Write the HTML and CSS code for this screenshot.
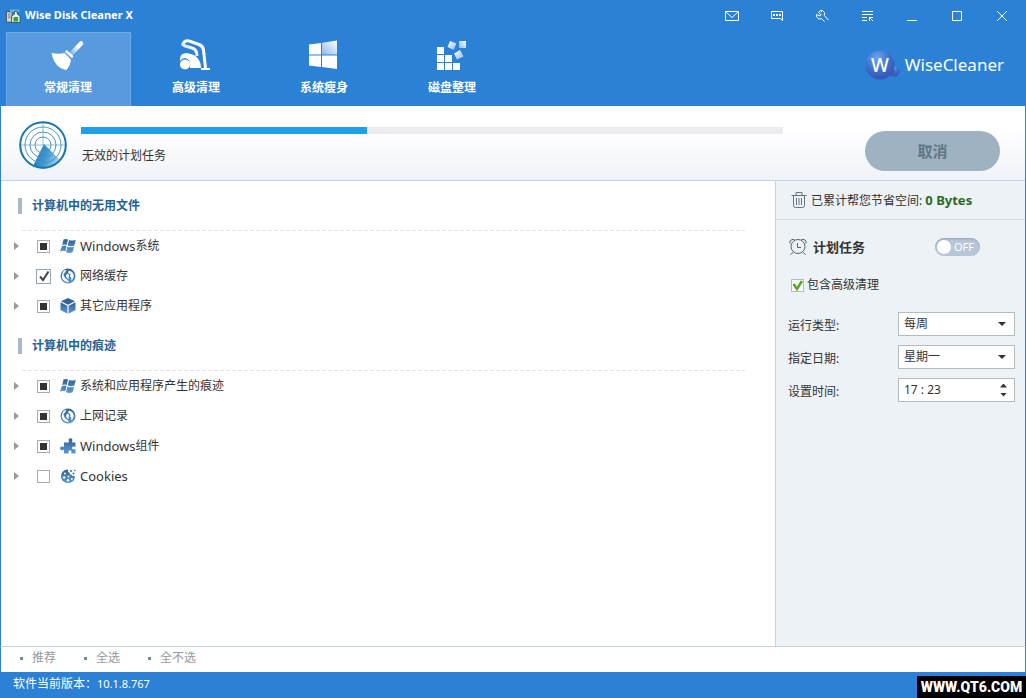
FILE: index.html
```
<!DOCTYPE html>
<html lang="zh-CN">
<head>
<meta charset="utf-8">
<title>Wise Disk Cleaner X</title>
<link rel="stylesheet" href="styles.css">
</head>
<body>
<svg class="defs" width="0" height="0" aria-hidden="true">
  <defs>
    <linearGradient id="steel" x1="0" y1="0" x2="0" y2="1"><stop offset="0" stop-color="#2f6094"/><stop offset="1" stop-color="#5b9bd3"/></linearGradient>
    <linearGradient id="fade" x1="1" y1="0" x2="0" y2="1"><stop offset="0.3" stop-color="#fff"/><stop offset="1" stop-color="#8fbcea"/></linearGradient>
    <linearGradient id="pane" x1="0" y1="1" x2="1" y2="0"><stop offset="0" stop-color="#8dbbea"/><stop offset="1" stop-color="#fff"/></linearGradient>
    <linearGradient id="tile" x1="0" y1="0" x2="1" y2="1"><stop offset="0" stop-color="#fff"/><stop offset="1" stop-color="#8dbbea"/></linearGradient>
    <radialGradient id="orb" cx="0.4" cy="0.25" r="0.8"><stop offset="0" stop-color="#6ba5ea"/><stop offset="0.55" stop-color="#3c6fd0"/><stop offset="1" stop-color="#3450ae"/></radialGradient>
    <linearGradient id="beam" x1="0" y1="0.3" x2="1" y2="0.6"><stop offset="0" stop-color="#1878bd"/><stop offset="0.5" stop-color="#3f98d2"/><stop offset="1" stop-color="#a9d3ec"/></linearGradient>
    <symbol id="flag" viewBox="0 0 16 16"><path fill="url(#steel)" d="M3.500 1.500Q6 .3 8 1.500L6.800 7Q4.600 5.800 2.200 7.100ZM9 2Q12 3.300 15.800 1.700L14.300 7.500Q11 8.800 7.800 7.400ZM1.900 8.200Q4.500 7 6.600 8.200L5.300 13.300Q3 12.100 0 13.400ZM7.500 8.700Q10.500 10 14 8.700L12.600 14.300Q9.500 15.700 6 14.200Z"/></symbol>
    <symbol id="globe" viewBox="0 0 16 16"><circle cx="8" cy="8" r="7.500" fill="url(#steel)"/><path fill="#fff" d="M3.500 3Q5 1.700 6.500 2L5 4.500 3.500 6Q3.500 8 5 10L7.500 12 9 14.300Q2.500 13.500 1.800 8.500 1.800 5 3.500 3ZM9 2.500Q13.800 4 13.800 8 13.500 11 11 12.500L11.500 10 10 8.500 10.500 6.500 8 4.500ZM6.500 6.500 8 5.500 9 7 8.500 9.500 9.500 11 7.500 10.500 6 8.500Z"/></symbol>
    <symbol id="cube" viewBox="0 0 16 16"><path fill="#2f6597" d="M8 0 15 3.200 8 6.800 1 3.200Z"/><path fill="url(#steel)" d="M.5 4.300 7.400 7.800V15.800L.5 12ZM15.500 4.300 8.600 7.800V15.800L15.500 12Z"/></symbol>
    <symbol id="puzzle" viewBox="0 0 16 16"><path fill="url(#steel)" d="M4 4.500H8.500Q9.300 3.800 8.700 2.800Q8.300.3 10.500.3Q12.700.3 12.300 2.800Q11.700 3.800 12.500 4.500H15.500V8.500Q14.800 9 13.700 8.600Q12 8.600 12 10Q12 11.400 13.700 11.300Q14.800 11 15.500 11.500V15.500H11.500Q11 14.800 11.500 13.800Q11.500 12.300 10 12.300Q8.500 12.300 8.500 13.800Q9 14.800 8.500 15.500H4V12Q3.300 11.500 2.500 12.200Q0 12.500 0 10.300Q0 8.200 2.500 8.500Q3.400 9 4 8.500Z"/></symbol>
    <symbol id="cookie" viewBox="0 0 16 16"><path fill="url(#steel)" d="M8 1.500Q7.500 4 9.500 4.500Q9.500 7 12 7Q13 8.800 15 8Q15 14.500 8.200 15Q1 14.500 1 8Q1.300 2 8 1.500Z"/><g fill="#fff"><circle cx="5" cy="5.500" r="1"/><circle cx="4.200" cy="9.500" r="1.200"/><circle cx="8.500" cy="8.500" r=".9"/><circle cx="8" cy="12.300" r="1.200"/><circle cx="11.800" cy="11" r="1"/></g><g fill="#386a9f"><circle cx="11" cy="3" r="1"/><circle cx="14.800" cy="2.500" r=".8"/><circle cx="13.500" cy="5.500" r="1"/></g></symbol>
  </defs>
</svg>

<header class="top">
  <div class="titlebar">
    <svg class="app-icon" viewBox="0 0 16 16" aria-hidden="true"><rect x="0" y="3" width="7" height="12" rx="1" fill="#444e55"/><rect x="1" y="4" width="5" height="10" fill="#d8dddf"/><path d="M2 6H5M2 8H5M2 10H5" stroke="#777"/><path d="M4 1H13L15 3 12 4H5Z" fill="#5bbbe7"/><path d="M9 3H12V6L15 8V15H6V8L9 6Z" fill="#eef6ef" stroke="#35515a"/><path d="M8 9H13V14H8Z" fill="#35a33b"/></svg>
    <h1 class="app-name">Wise Disk Cleaner X</h1>
    <div class="window-tools">
      <button class="tool" aria-label="邮件"><svg viewBox="0 0 16 16"><path d="M1.500 3.500H14.500V12.500H1.500ZM2 4 8 9.500 14 4"/></svg></button>
      <button class="tool" aria-label="反馈"><svg viewBox="0 0 16 16"><path d="M2.500 3.500H13.500V12.500L11.500 10.500H2.500Z"/><path d="M4 7H6M7 7H9M10 7H12" stroke-width="2"/></svg></button>
      <button class="tool" aria-label="工具"><svg viewBox="0 0 16 16"><path d="M8.500 2.500Q5.500 1.800 4.500 4.500L7 6.500 6 8 2.500 6.500Q1.800 9.500 4.500 10.800 6 11.300 7.500 10.500L10.500 13.500M8.500 2.500 6.800 4.200M8.500 2.500Q11.500 4 10.300 7.500L14.500 12"/></svg></button>
      <button class="tool" aria-label="菜单"><svg viewBox="0 0 16 16"><path d="M3 3.500H14M3 6.500H14M3 9.500H8M3 12.500H8M10.500 13V9.500H14M10.500 9.500 14 13"/></svg></button>
      <button class="tool" aria-label="最小化"><svg viewBox="0 0 16 16"><path d="M3 12.500H13"/></svg></button>
      <button class="tool" aria-label="最大化"><svg viewBox="0 0 16 16"><path d="M3.500 3.500H12.500V12.500H3.500Z"/></svg></button>
      <button class="tool" aria-label="关闭"><svg viewBox="0 0 16 16"><path d="M3 3 13 13M13 3 3 13"/></svg></button>
    </div>
  </div>
  <div class="navbar">
    <nav class="tabs">
      <button class="tab active"><svg viewBox="0 0 36 32"><path d="M22 14 31 4.500" stroke="url(#fade)" stroke-width="4.500" stroke-linecap="round"/><path d="M16.500 12.500 22 17.500" stroke="#fff" stroke-width="2.500" stroke-linecap="round"/><path fill="#fff" d="M14.500 14 21 20.500Q20.500 26 16.500 31 4.500 29 1.500 14 8.500 15.500 14.500 14Z"/></svg><span>常规清理</span></button>
      <button class="tab"><svg viewBox="0 0 36 32"><path d="M5 7Q5 1 11 2L21 5.500Q25 7 25.500 11L27.500 29" fill="none" stroke="#fff" stroke-width="3"/><path d="M5 4Q5 7 9 7.500L14 9Q19 10.500 19 17" fill="none" stroke="url(#fade)" stroke-width="3"/><path fill="#fff" d="M2 20Q2 14 9 14L16 16Q23 20 23 29H12Q13 20 7 19 4 19 2 22ZM23 29H32V31H23Z"/><circle cx="7" cy="25.500" r="5" fill="#fff"/></svg><span>高级清理</span></button>
      <button class="tab"><svg viewBox="0 0 36 32"><path fill="#fff" d="M3 5.500 15 4V15.500H3ZM3 16.500H15V28L3 26.500ZM16 16.500H31V30L16 28Z"/><path fill="url(#pane)" d="M16 3.800 31 1.500V15.500H16Z"/></svg><span>系统瘦身</span></button>
      <button class="tab"><svg viewBox="0 0 36 32"><path fill="#fff" d="M3 8H10V15H3ZM3 16H10V23H3ZM11 16H18V23H11ZM3 24H10V31H3ZM11 24H18V31H11ZM19 24H26V31H19Z"/><path fill="url(#pane)" d="M25 2H32V9H25Z"/><path fill="url(#tile)" d="M16 2 22.500 4.500 19.500 11 13.500 8Z"/><path fill="url(#tile)" d="M26 11 29.500 17.500 23 20.500 20 14.500Z"/></svg><span>磁盘整理</span></button>
    </nav>
    <div class="brand">
      <svg viewBox="0 0 36 30" aria-hidden="true"><circle cx="29" cy="21" r="5.500" fill="url(#orb)"/><path d="M23 20H30V26H21Z" fill="#3c60bd"/><circle cx="15" cy="15" r="14.500" fill="url(#orb)"/><text x="15" y="22" text-anchor="middle">W</text></svg>
      <span>WiseCleaner</span>
    </div>
  </div>
</header>

<section class="scan">
  <svg class="radar" viewBox="0 0 48 48" aria-hidden="true"><circle cx="24" cy="24" r="23" fill="#fff"/><path d="M25 23 14 45Q24 50 34 45.500 38 43.500 41 39Z" fill="url(#beam)"/><g fill="none" stroke="#4b93c3"><circle cx="24" cy="24" r="8"/><circle cx="24" cy="24" r="13"/><circle cx="24" cy="24" r="18"/><path d="M24 1V24M1 24H47" opacity=".6"/></g><circle cx="24" cy="24" r="22.800" fill="none" stroke="#1675ab" stroke-width="2"/></svg>
  <div class="progress-area">
    <progress class="progress" value="286" max="702" aria-label="进度"></progress>
    <p class="progress-text">无效的计划任务</p>
  </div>
  <button class="cancel">取消</button>
</section>

<main class="main">
  <section class="lists">
    <h2 class="group-title">计算机中的无用文件</h2>
    <ul class="items">
      <li class="item"><button class="expand" aria-label="展开"></button><input type="checkbox" id="c1" class="check" data-partial><svg><use href="#flag"/></svg><label for="c1"><span class="latin">Windows</span>系统</label></li>
      <li class="item"><button class="expand" aria-label="展开"></button><input type="checkbox" id="c2" class="check" checked><svg><use href="#globe"/></svg><label for="c2">网络缓存</label></li>
      <li class="item"><button class="expand" aria-label="展开"></button><input type="checkbox" id="c3" class="check" data-partial><svg><use href="#cube"/></svg><label for="c3">其它应用程序</label></li>
    </ul>
    <h2 class="group-title">计算机中的痕迹</h2>
    <ul class="items">
      <li class="item"><button class="expand" aria-label="展开"></button><input type="checkbox" id="c4" class="check" data-partial><svg><use href="#flag"/></svg><label for="c4">系统和应用程序产生的痕迹</label></li>
      <li class="item"><button class="expand" aria-label="展开"></button><input type="checkbox" id="c5" class="check" data-partial><svg><use href="#globe"/></svg><label for="c5">上网记录</label></li>
      <li class="item"><button class="expand" aria-label="展开"></button><input type="checkbox" id="c6" class="check" data-partial><svg><use href="#puzzle"/></svg><label for="c6"><span class="latin">Windows</span>组件</label></li>
      <li class="item"><button class="expand" aria-label="展开"></button><input type="checkbox" id="c7" class="check"><svg><use href="#cookie"/></svg><label for="c7"><span class="latin">Cookies</span></label></li>
    </ul>
  </section>

  <aside class="side">
    <div class="saved">
      <svg viewBox="0 0 16 16" aria-hidden="true"><path d="M.5 3.500H15.500M5 3V.500H11V3M2.500 4V13.500Q2.500 15.500 4.500 15.500H11.500Q13.500 15.500 13.500 13.500V4M5.500 6V13M8 6V13M10.500 6V13"/></svg>
      <span>已累计帮您节省空间: <strong>0 Bytes</strong></span>
    </div>
    <div class="schedule">
      <div class="schedule-head">
        <svg viewBox="0 0 18 18" aria-hidden="true"><circle cx="9" cy="8.500" r="7"/><path d="M8.500 5V9.500H12M1 5.500V3L3 1.500H5.500M17 5.500V3L15 1.500H12.500M4 14.500 1.500 16.500M14 14.500 16.500 16.500"/></svg>
        <h2>计划任务</h2>
        <button class="switch" role="switch" aria-checked="false" aria-label="计划任务"><span class="knob"></span>OFF</button>
      </div>
      <div class="include"><input type="checkbox" id="adv" class="green-check" checked><label for="adv">包含高级清理</label></div>
      <div class="field"><label for="type">运行类型:</label><select id="type"><option>每周</option></select></div>
      <div class="field"><label for="day">指定日期:</label><select id="day"><option>星期一</option></select></div>
      <div class="field"><label for="time">设置时间:</label><div class="spin"><input id="time" type="text" value="17 : 23"><span class="steps"><button aria-label="增加"></button><button class="down" aria-label="减少"></button></span></div></div>
    </div>
  </aside>
</main>

<footer class="foot">
  <div class="links"><a href="#">推荐</a><a href="#">全选</a><a href="#">全不选</a></div>
  <div class="status"><span>软件当前版本：</span><span>10.1.8.767</span></div>
  <div class="site-tag">WWW.QT6.COM</div>
</footer>
<script src="app.js"></script>
</body>
</html>
```
FILE: styles.css
```
* { box-sizing: border-box; }
html { background: #2b81d5; }
body {
  margin: 0;
  min-height: 100vh;
  display: flex;
  flex-direction: column;
  background: #fff;
  color: #333;
  font: 12px/18px "Noto Sans", "Noto Sans CJK SC", sans-serif;
}
h1, h2, p, ul { margin: 0; padding: 0; }
ul { list-style: none; }
button { border: 0; padding: 0; background: none; color: inherit; font: inherit; }
svg { flex: none; }
.defs { position: absolute; }

/* Header */
.top { background: #2b81d5; color: #fff; }
.titlebar { display: flex; align-items: center; height: 32px; padding: 0 2px 0 6px; }
.app-icon { width: 15px; height: 16px; margin-right: 4px; }
.app-name { padding-bottom: 2px; font-size: 11px; line-height: 18px; font-weight: 700; }
.window-tools { display: flex; margin-left: auto; }
.tool { width: 45px; height: 32px; display: grid; place-items: center; }
.tool svg { width: 16px; height: 16px; fill: none; stroke: #fff; }
.navbar { display: flex; align-items: center; justify-content: space-between; height: 74px; padding: 0 22px 0 6px; }
.tabs { display: flex; align-self: stretch; gap: 3px; }
.tab {
  width: 125px;
  display: flex;
  flex-direction: column;
  align-items: center;
  gap: 8px;
  padding: 6px 1px 0 0;
  border: 1px solid transparent;
  border-bottom: 0;
  font-weight: 700;
}
.tab svg { width: 36px; height: 32px; fill: none; }
.tab.active { background: #579ade; border-color: #6eaae5; }
.brand { display: flex; align-items: center; gap: 4px; padding-bottom: 9px; font: 17px/30px "Noto Sans", sans-serif; }
.brand svg { width: 36px; height: 30px; }
.brand text { fill: #fff; font: 500 19px "Noto Sans", sans-serif; }

/* Scan progress */
.scan {
  display: flex;
  align-items: flex-start;
  height: 75px;
  padding: 15px 25px 0 18px;
  border: solid #2b81d5;
  border-width: 0 1px;
  background: linear-gradient(#fff 30%, #eff2f7);
  box-shadow: inset 0 -1px #c6d2df;
}
.radar { width: 48px; height: 48px; margin-right: 14px; }
.progress-area { flex: 1; padding-top: 6px; }
.progress { display: block; width: 100%; height: 7px; appearance: none; border: 0; background: #ececec; }
.progress::-webkit-progress-bar { background: #ececec; }
.progress::-webkit-progress-value { background: #209fe9; }
.progress-text { padding: 13px 0 0 1px; }
.cancel {
  width: 135px;
  height: 40px;
  margin: 10px 0 0 82px;
  border-radius: 20px;
  background: #9fb2c2;
  color: #607785;
  font-size: 15px;
  font-weight: 700;
}

/* Content */
.main { flex: 1; display: flex; border: solid #2b81d5; border-width: 0 1px; }
.lists { flex: 1; padding: 0 30px 0 13px; }
.group-title {
  display: flex;
  align-items: center;
  gap: 10px;
  height: 50px;
  margin-left: 4px;
  background: repeating-linear-gradient(90deg, #e4e4e4 0 4px, transparent 4px 6px) 4px 100% / 100% 1px no-repeat;
  color: #1f6399;
  font-size: 12px;
}
.group-title::before { content: ""; width: 4px; height: 16px; background: #a9b9c9; }
.item { display: flex; align-items: center; height: 30px; }
.expand { width: 23px; height: 30px; }
.expand::before { content: ""; display: block; width: 5px; height: 8px; background: #999; clip-path: polygon(0 0, 100% 50%, 0 100%); }
.check {
  appearance: none;
  width: 13px;
  height: 13px;
  margin: 0 10px 0 0;
  border: 1px solid #aaa;
  background: #fff;
}
.check:indeterminate { background: linear-gradient(#333, #333) center / 7px 7px no-repeat #fff; }
.check:checked {
  width: 15px;
  height: 15px;
  margin: 0 9px 0 -1px;
  border-color: #90a4b8;
  background: url("data:image/svg+xml,%3Csvg xmlns='http://www.w3.org/2000/svg' viewBox='0 0 13 13'%3E%3Cpath d='M3 6.500 6 10 11.500 1.500' fill='none' stroke='%23444' stroke-width='2'/%3E%3C/svg%3E") #fff;
}
.item svg { width: 16px; height: 16px; margin-right: 4px; }
.item label { display: flex; align-items: center; }
.latin { font-size: 13px; line-height: 18px; }

/* Sidebar */
.side { width: 250px; background: #ecf2f5; border-left: 1px solid #c6d2df; }
.saved { display: flex; align-items: center; gap: 4px; height: 39px; padding-left: 15px; border-bottom: 1px solid #d3dde3; }
.saved svg { width: 16px; height: 16px; fill: none; stroke: #68747f; }
.saved strong { color: #2b6a24; font-size: 13px; }
.schedule { padding: 16px 10px 0 12px; }
.schedule-head { display: flex; align-items: center; height: 22px; }
.schedule-head svg { width: 18px; height: 18px; margin: 0 6px 0 1px; fill: none; stroke: #59636c; }
.schedule-head h2 { font-size: 13px; line-height: 20px; }
.switch {
  display: flex;
  align-items: center;
  gap: 3px;
  width: 45px;
  height: 18px;
  margin: 0 35px 0 auto;
  padding-left: 2px;
  border-radius: 9px;
  background: #b8c7d7;
  box-shadow: inset 0 1px 2px #93a5b8;
  color: #fff;
  font-size: 11px;
}
.knob { width: 14px; height: 14px; border-radius: 50%; background: #fff; }
.include { display: flex; align-items: center; gap: 3px; height: 18px; margin: 18px 0 0 3px; }
.green-check {
  appearance: none;
  width: 13px;
  height: 13px;
  margin: 0;
  border: 1px solid #b5bcc0;
}
.green-check:checked { background: url("data:image/svg+xml,%3Csvg xmlns='http://www.w3.org/2000/svg' viewBox='0 0 11 11'%3E%3Cpath d='M1.500 4 5 9 10 1' fill='none' stroke='%2355a821' stroke-width='2.500'/%3E%3C/svg%3E") #fff; }
.field { display: flex; align-items: center; justify-content: space-between; height: 24px; margin-top: 9px; }
.include + .field { margin-top: 18px; }
.field > label { padding-top: 3px; }
.field select, .spin { width: 117px; height: 24px; border: 1px solid #b5bcc0; border-radius: 0; background: #fff; color: #333; font: inherit; }
.field select {
  appearance: none;
  padding: 0 5px;
  background: url("data:image/svg+xml,%3Csvg xmlns='http://www.w3.org/2000/svg' width='8' height='4'%3E%3Cpath d='M0 0H8L4 4Z' fill='%23333'/%3E%3C/svg%3E") right 8px center no-repeat #fff;
}
.spin { display: flex; }
.spin input { flex: 1; min-width: 0; padding: 0 5px; border: 0; background: none; color: inherit; font: inherit; }
.steps { display: flex; flex-direction: column; justify-content: center; gap: 5px; padding-right: 7px; }
.steps button { width: 7px; height: 4px; background: #333; clip-path: polygon(50% 0, 100% 100%, 0 100%); }
.steps .down { clip-path: polygon(0 0, 100% 0, 50% 100%); }

/* Footer */
.foot { position: relative; }
.links { display: flex; gap: 28px; height: 26px; padding: 2px 0 0 19px; border: 1px solid #c6d2df; border-width: 1px 1px 0; border-left-color: #2b81d5; border-right-color: #2b81d5; }
.links a { display: flex; align-items: center; height: 18px; gap: 9px; color: #999; text-decoration: none; }
.links a::before { content: ""; width: 3px; height: 3px; background: #6d8ca1; }
.status { display: flex; align-items: center; height: 26px; padding: 0 0 2px 13px; background: #2b81d5; color: #fff; }
.status span + span { font-size: 11px; }
.site-tag {
  position: absolute;
  right: 0;
  bottom: 0;
  width: 109px;
  height: 22px;
  background: #000;
  color: #fff;
  font: 900 14px/23px Roboto, sans-serif;
  text-align: center;
}
```
FILE: app.js
```
document.querySelectorAll("[data-partial]").forEach(function (box) {
  box.indeterminate = true;
});
```
